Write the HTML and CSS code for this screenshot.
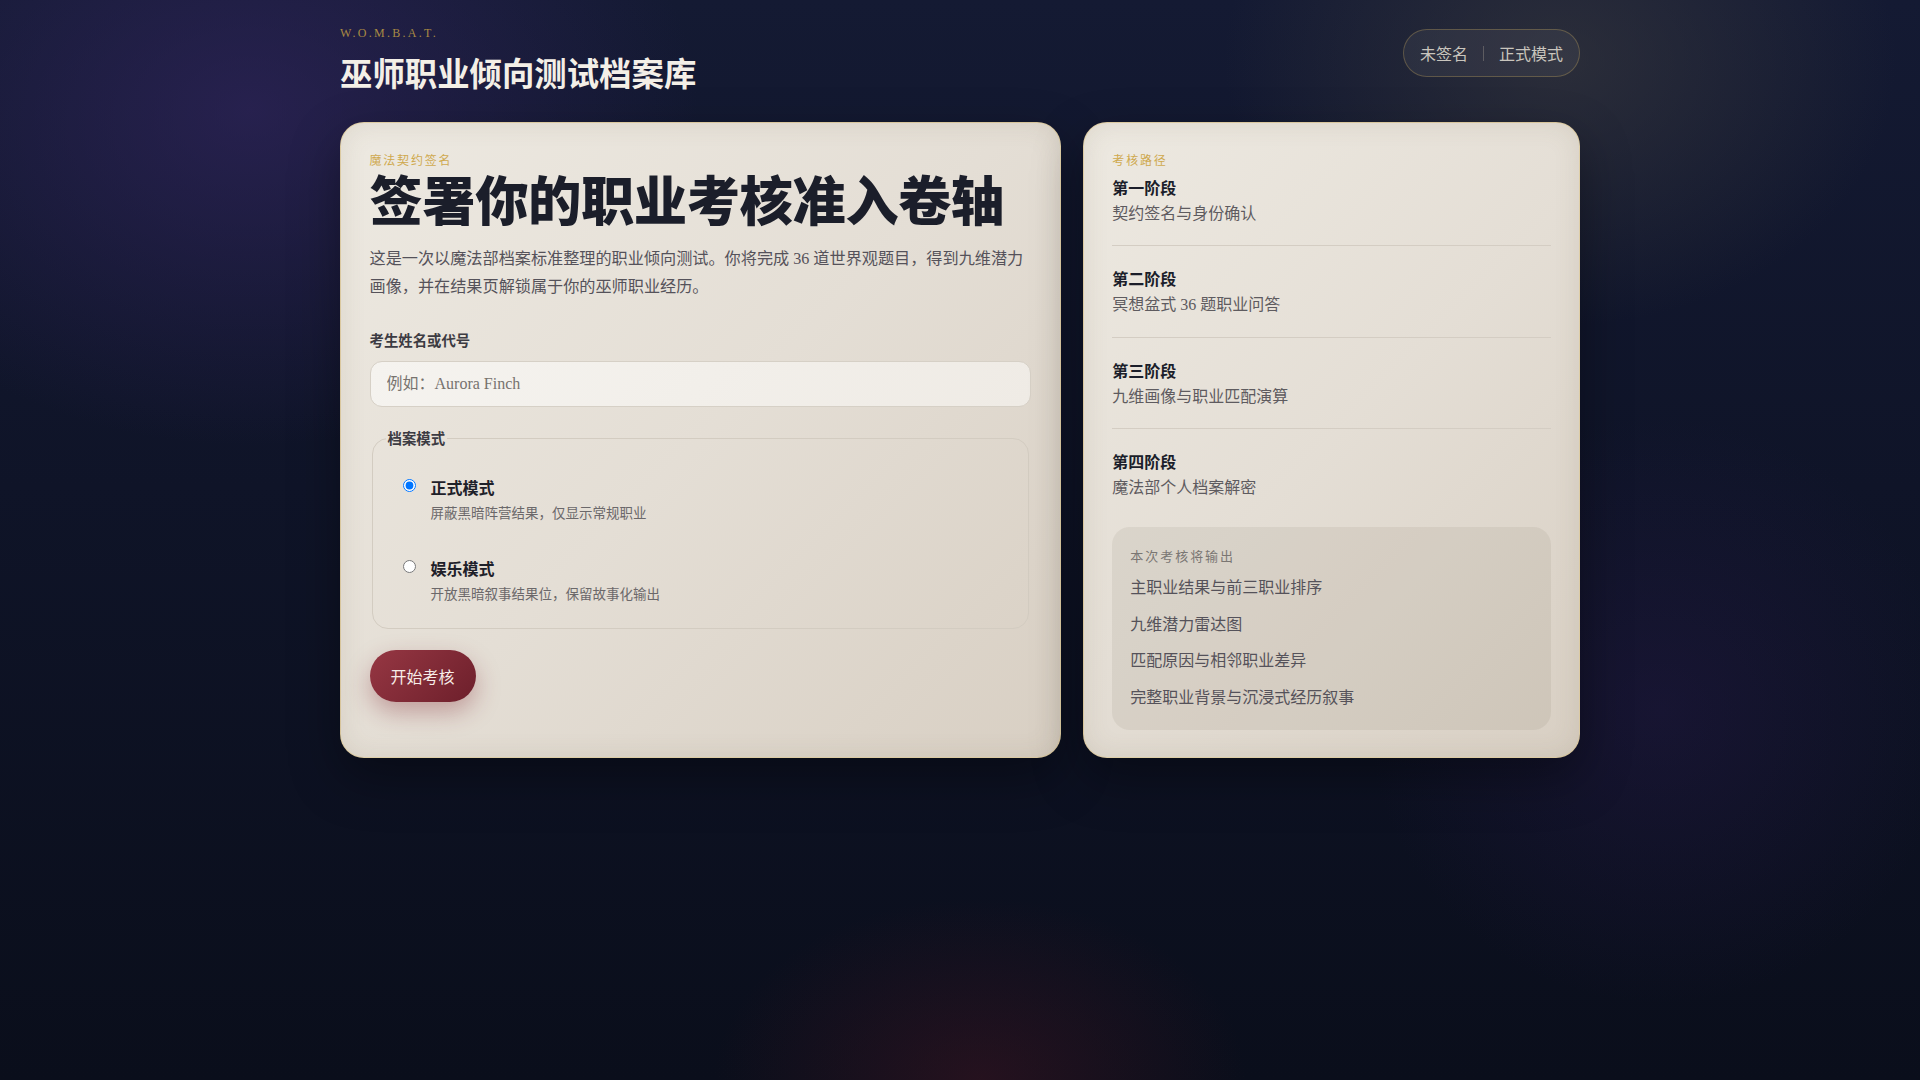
FILE: index.html
```html
<!DOCTYPE html>
<html lang="zh-CN">
<head>
    <meta charset="UTF-8">
    <meta name="viewport" content="width=device-width, initial-scale=1.0">
    <title>巫师职业倾向测试档案库</title>
    <link rel="stylesheet" href="styles.css">
</head>
<body>
    <div class="page">
        <header class="top-bar">
            <div class="brand">
                <div class="brand-mark">W.O.M.B.A.T.</div>
                <h1 class="brand-title">巫师职业倾向测试档案库</h1>
            </div>
            <div class="status-pill">
                <span>未签名</span>
                <span class="pill-divider"></span>
                <span>正式模式</span>
            </div>
        </header>

        <main class="layout">
            <section class="card sign-card">
                <div class="eyebrow">魔法契约签名</div>
                <h2 class="sign-title">签署你的职业考核准入卷轴</h2>
                <p class="intro">这是一次以魔法部档案标准整理的职业倾向测试。你将完成 36 道世界观题目，得到九维潜力画像，并在结果页解锁属于你的巫师职业经历。</p>

                <label class="field-label" for="nameInput">考生姓名或代号</label>
                <input type="text" id="nameInput" class="name-input" placeholder="例如：Aurora Finch">

                <fieldset class="mode-set">
                    <legend>档案模式</legend>
                    <label class="mode-option">
                        <input type="radio" name="mode" value="formal" checked>
                        <span class="mode-text">
                            <strong>正式模式</strong>
                            <small>屏蔽黑暗阵营结果，仅显示常规职业</small>
                        </span>
                    </label>
                    <label class="mode-option">
                        <input type="radio" name="mode" value="fun">
                        <span class="mode-text">
                            <strong>娱乐模式</strong>
                            <small>开放黑暗叙事结果位，保留故事化输出</small>
                        </span>
                    </label>
                </fieldset>

                <button class="start-button" type="button">开始考核</button>
            </section>

            <aside class="card path-card">
                <div class="eyebrow path-eyebrow">考核路径</div>
                <ol class="steps">
                    <li class="step">
                        <strong>第一阶段</strong>
                        <span>契约签名与身份确认</span>
                    </li>
                    <li class="step">
                        <strong>第二阶段</strong>
                        <span>冥想盆式 36 题职业问答</span>
                    </li>
                    <li class="step">
                        <strong>第三阶段</strong>
                        <span>九维画像与职业匹配演算</span>
                    </li>
                    <li class="step">
                        <strong>第四阶段</strong>
                        <span>魔法部个人档案解密</span>
                    </li>
                </ol>
                <div class="output-box">
                    <div class="output-title">本次考核将输出</div>
                    <ul class="output-list">
                        <li>主职业结果与前三职业排序</li>
                        <li>九维潜力雷达图</li>
                        <li>匹配原因与相邻职业差异</li>
                        <li>完整职业背景与沉浸式经历叙事</li>
                    </ul>
                </div>
            </aside>
        </main>
    </div>
</body>
</html>
```

FILE: styles.css
```css
html, body {
    height: 100%;
}
body {
    margin: 0;
    font-family: "Liberation Serif", "Noto Sans CJK SC", serif;
    color: #1b1e2a;
    background-color: #0b0f1d;
    background-image:
        radial-gradient(ellipse 640px 480px at 250px 110px, rgba(52, 38, 98, 0.6), transparent 70%),
        radial-gradient(ellipse 480px 380px at 1560px 60px, rgba(62, 62, 64, 0.55), transparent 70%),
        radial-gradient(ellipse 420px 420px at 1660px 710px, rgba(42, 26, 78, 0.35), transparent 70%),
        radial-gradient(ellipse 380px 260px at 980px 1080px, rgba(70, 22, 34, 0.45), transparent 70%),
        linear-gradient(180deg, #141a33 0%, #0f1428 45%, #0a0e1b 100%);
}
.page {
    max-width: 1240px;
    margin: 0 auto;
    padding-top: 24px;
}
.top-bar {
    display: flex;
    justify-content: space-between;
    align-items: flex-start;
}
.brand-mark {
    font-size: 12px;
    line-height: 18px;
    letter-spacing: 0.19em;
    color: #a98a43;
}
.brand-title {
    margin: 11px 0 0;
    font-family: "Noto Sans CJK SC", sans-serif;
    font-size: 32.4px;
    line-height: 38px;
    font-weight: 700;
    color: #f3efe7;
}
.status-pill {
    margin-top: 5px;
    display: flex;
    align-items: center;
    gap: 15px;
    height: 46px;
    padding: 0 16px;
    border: 1px solid rgba(190, 160, 90, 0.35);
    border-radius: 999px;
    background: rgba(255, 255, 255, 0.05);
    font-family: "Noto Sans CJK SC", sans-serif;
    font-size: 16px;
    color: #c9c5bd;
}
.pill-divider {
    width: 1px;
    height: 15px;
    background: rgba(200, 190, 170, 0.3);
}
.layout {
    margin-top: 31px;
    display: grid;
    grid-template-columns: minmax(0, 1.45fr) minmax(0, 1fr);
    gap: 22px;
    align-items: stretch;
}
.card {
    border-radius: 24px;
    padding: 28.5px;
    border: 1px solid rgba(214, 186, 120, 0.55);
    background: linear-gradient(135deg, #ede9e1 0%, #e4ded5 50%, #d8cfc3 100%);
    box-shadow: inset 0 0 26px rgba(110, 90, 60, 0.12), 0 20px 50px rgba(0, 0, 0, 0.35);
}
.path-card {
    padding-bottom: 27px;
}
.eyebrow {
    font-family: "Noto Sans CJK SC", sans-serif;
    font-size: 12px;
    line-height: 16px;
    letter-spacing: 0.15em;
    color: #cfa94e;
    margin-bottom: 1px;
}
.path-eyebrow {
    margin-bottom: 7px;
}
.sign-title {
    margin: 0;
    font-family: "Noto Sans CJK SC", sans-serif;
    font-size: 53.4px;
    line-height: 58px;
    font-weight: 900;
    color: #1b1e2a;
    letter-spacing: -0.01em;
}
.intro {
    margin: 18px 0 0;
    font-size: 16.15px;
    line-height: 28px;
    color: #55525a;
}
.field-label {
    display: block;
    margin-top: 29.5px;
    font-family: "Noto Sans CJK SC", sans-serif;
    font-size: 14.4px;
    line-height: 20px;
    font-weight: 700;
    color: #3c3b42;
}
.name-input {
    display: block;
    box-sizing: border-box;
    width: 100%;
    height: 46.5px;
    margin-top: 10.5px;
    padding: 0 16px;
    border: 1px solid #d6d0c6;
    border-radius: 12px;
    background: linear-gradient(135deg, #f5f3ef, #efebe5);
    font-family: "Liberation Serif", "Noto Sans CJK SC", serif;
    font-size: 16px;
    color: #2a2a30;
    outline: none;
}
.name-input::placeholder {
    color: #77736f;
}
.mode-set {
    margin: 21px 2px 0;
    padding: 10px 14px 8.5px 13px;
    border: 1px solid #d3ccc1;
    border-radius: 16px;
}
.mode-set legend {
    padding: 0 2px;
    font-family: "Noto Sans CJK SC", sans-serif;
    font-size: 14.4px;
    line-height: 20px;
    font-weight: 700;
    color: #3c3b42;
}
.mode-option {
    display: flex;
    align-items: flex-start;
    gap: 15px;
    padding: 16.7px 17px;
    cursor: pointer;
}
.mode-option input {
    margin: 4px 0 0;
    width: 13px;
    height: 13px;
    flex: none;
}
.mode-text {
    display: flex;
    flex-direction: column;
    font-family: "Noto Sans CJK SC", sans-serif;
}
.mode-text strong {
    font-size: 16px;
    line-height: 24px;
    color: #1e2029;
}
.mode-text small {
    margin-top: 3.5px;
    font-size: 13.5px;
    line-height: 20px;
    color: #6b686a;
}
.start-button {
    margin-top: 21px;
    padding: 14px 21px;
    border: none;
    border-radius: 999px;
    background: linear-gradient(135deg, #963743 0%, #6d1f2b 100%);
    color: #f7ece8;
    font-family: "Noto Sans CJK SC", sans-serif;
    font-size: 16px;
    line-height: 24px;
    cursor: pointer;
    box-shadow: 0 10px 24px rgba(125, 35, 45, 0.35);
}
.steps {
    list-style: none;
    margin: 0;
    padding: 0;
}
.step {
    display: flex;
    flex-direction: column;
    padding: 19.8px 0;
    border-bottom: 1px solid #d4cdc3;
    font-family: "Noto Sans CJK SC", sans-serif;
}
.step:first-child {
    padding-top: 0;
}
.step:last-child {
    border-bottom: none;
}
.step strong {
    font-size: 16px;
    line-height: 24px;
    color: #1b1e2a;
}
.step span {
    margin-top: 3px;
    font-family: "Liberation Serif", "Noto Sans CJK SC", serif;
    font-size: 16px;
    line-height: 24px;
    color: #5e5b5f;
}
.output-box {
    margin-top: 7px;
    padding: 19.5px 18px 21px;
    border-radius: 18px;
    background: rgba(120, 105, 90, 0.1);
}
.output-title {
    font-family: "Noto Sans CJK SC", sans-serif;
    font-size: 13px;
    line-height: 18px;
    letter-spacing: 0.15em;
    color: #7a7673;
    margin-bottom: 8.5px;
}
.output-list {
    list-style: none;
    margin: 0;
    padding: 0;
    display: flex;
    flex-direction: column;
    gap: 10.6px;
}
.output-list li {
    font-family: "Noto Sans CJK SC", sans-serif;
    font-size: 16px;
    line-height: 26px;
    color: #55525a;
}
```
